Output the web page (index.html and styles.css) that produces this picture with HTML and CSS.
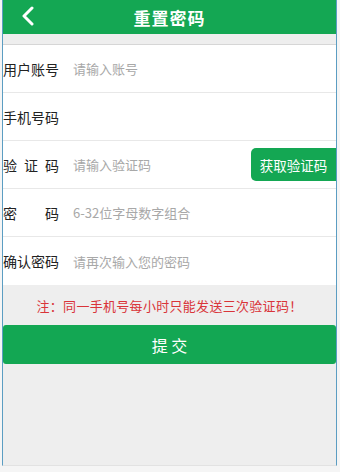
FILE: index.html
```html
<!DOCTYPE html>
<html lang="zh">
<head>
<meta charset="utf-8">
<link rel="stylesheet" href="styles.css">
</head>
<body>
<div class="frame">
  <header class="topbar">
    <svg class="back" width="14" height="20" viewBox="0 0 14 20"><path d="M11 2 L3 10 L11 18" fill="none" stroke="#fff" stroke-width="3" stroke-linecap="round" stroke-linejoin="round"/></svg>
    <h1 class="title">重置密码</h1>
  </header>
  <div class="gap"></div>
  <div class="form">
    <div class="row"><span class="label"><span>用</span><span>户</span><span>账</span><span>号</span></span><span class="ph">请输入账号</span></div>
    <div class="row"><span class="label"><span>手</span><span>机</span><span>号</span><span>码</span></span><span class="ph"></span></div>
    <div class="row"><span class="label"><span>验</span><span>证</span><span>码</span></span><span class="ph">请输入验证码</span><span class="code-btn">获取验证码</span></div>
    <div class="row"><span class="label"><span>密</span><span>码</span></span><span class="ph">6-32位字母数字组合</span></div>
    <div class="row"><span class="label"><span>确</span><span>认</span><span>密</span><span>码</span></span><span class="ph">请再次输入您的密码</span></div>
  </div>
  <p class="note">注：同一手机号每小时只能发送三次验证码！</p>
  <div class="submit">提 交</div>
</div>
</body>
</html>
```
FILE: styles.css
```css
html, body {
  margin: 0;
  padding: 0;
  background: #f5f5f5;
  font-family: "Noto Sans CJK SC", "Noto Sans", sans-serif;
}
.frame {
  margin-left: 2px;
  width: 335px;
  height: 466px;
  border-left: 1px solid #5b9dc2;
  border-right: 1px solid #5b9dc2;
  border-bottom: 1px solid #e2e2e2;
  background: #eeeeee;
  box-sizing: border-box;
  display: flex;
  flex-direction: column;
}
.topbar {
  height: 34px;
  background: #14a753;
  display: flex;
  align-items: center;
  justify-content: center;
  position: relative;
}
.back {
  position: absolute;
  left: 18px;
  top: 6px;
}
.title {
  margin: 0;
  color: #fff;
  font-size: 17px;
  font-weight: bold;
  letter-spacing: 1px;
}
.gap {
  height: 10px;
  border-bottom: 1px solid #d6d6d6;
}
.form {
  background: #fff;
  display: flex;
  flex-direction: column;
}
.row {
  height: 48px;
  border-bottom: 1px solid #e8e8e8;
  display: flex;
  align-items: center;
  box-sizing: border-box;
}
.row:last-child {
  border-bottom: none;
}
.label {
  width: 56px;
  margin-right: 14px;
  font-size: 14px;
  color: #222;
  display: flex;
  justify-content: space-between;
}
.ph {
  flex: 1;
  font-size: 13px;
  color: #a8a8a8;
}
.code-btn {
  background: #14a753;
  color: #fff;
  font-size: 13.5px;
  height: 33px;
  width: 85px;
  border-radius: 5px 0 0 5px;
  display: flex;
  align-items: center;
  justify-content: center;
}
.note {
  margin: 0;
  height: 40px;
  display: flex;
  align-items: center;
  justify-content: center;
  color: #d93439;
  font-size: 13px;
  letter-spacing: 0.3px;
}
.submit {
  height: 39px;
  background: #13a753;
  color: #fff;
  font-size: 16px;
  border-radius: 3px;
  display: flex;
  align-items: center;
  justify-content: center;
}
```
